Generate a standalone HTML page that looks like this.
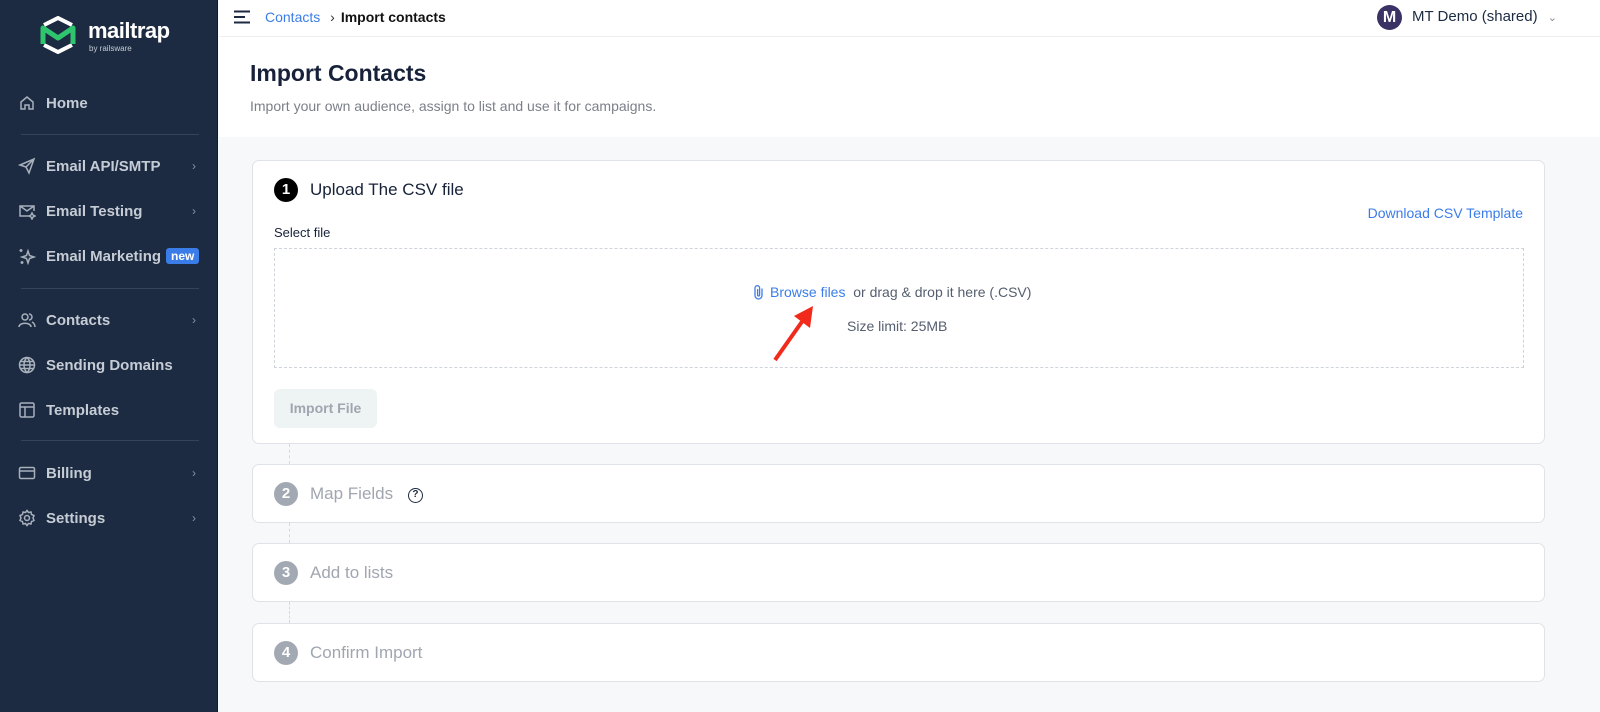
<!DOCTYPE html>
<html><head><style>
*{box-sizing:border-box;margin:0;padding:0}
body{width:1600px;height:712px;overflow:hidden;font-family:"Liberation Sans",Arial,sans-serif;background:#f7f8f9;position:relative}
.sb{position:absolute;left:0;top:0;width:218px;height:712px;background:#1c2b42;border-right:1px solid #0f1a2a}
.it{position:absolute;left:18px;display:flex;align-items:center;color:#c6ccd5;font-size:15px;font-weight:bold}
.it svg{width:18px;height:18px;margin-right:10px;stroke:#a8b0bc;fill:none;stroke-width:1.5}
.ch{position:absolute;left:192px;color:#8a94a3;font-size:12px}
.sep{position:absolute;left:21px;width:178px;height:1px;background:#34445c}
.top{position:absolute;left:219px;top:0;right:0;height:37px;background:#fff;border-bottom:1px solid #eceef0}
.ph{position:absolute;left:219px;top:37px;right:0;height:100px;background:#fff}
.card{position:absolute;left:252px;width:1293px;background:#fff;border:1px solid #dfe3e8;border-radius:7px}
.num{position:absolute;left:21px;width:24px;height:24px;border-radius:50%;color:#fff;font-weight:bold;font-size:15px;text-align:center;line-height:24px}
.ttl{position:absolute;left:57px;font-size:17px}
.dash{position:absolute;left:289px;width:0;border-left:1px dashed #d5d9de}
</style></head><body>
<div class="sb">
 <svg style="position:absolute;left:40px;top:16px" width="36" height="38" viewBox="0 0 36 38"><path d="M4 9 L18 2 L32 9" stroke="#fff" stroke-width="4" fill="none"/><path d="M4 29 L18 36 L32 29" stroke="#fff" stroke-width="4" fill="none"/><path d="M3 28 V12 L18 22 L33 12 V28" stroke="#2fc46e" stroke-width="5" fill="none" stroke-linejoin="round"/></svg>
 <div style="position:absolute;left:88px;top:18px;color:#fff;font-size:22px;font-weight:bold;letter-spacing:-0.5px">mailtrap</div>
 <div style="position:absolute;left:89px;top:44px;color:#c6ccd5;font-size:8px">by railsware</div>
 <div class="it" style="top:94px"><svg viewBox="0 0 18 18"><path d="M3 8 L9 3 L15 8 V15 H11 V11 H7 V15 H3 Z"/></svg>Home</div>
 <div class="sep" style="top:134px"></div>
 <div class="it" style="top:157px"><svg viewBox="0 0 18 18"><path d="M2 8 L16 2 L11 16 L8 10 Z M8 10 L16 2"/></svg>Email API/SMTP</div><div class="ch" style="top:159px">›</div>
 <div class="it" style="top:202px"><svg viewBox="0 0 18 18"><path d="M11 14 H2 V4 H16 V9 M2 4 L9 9 L16 4 M14 11 l1 2 l2 1 l-2 1 l-1 2 l-1-2 l-2-1 l2-1z"/></svg>Email Testing</div><div class="ch" style="top:204px">›</div>
 <div class="it" style="top:247px"><svg viewBox="0 0 18 18"><path d="M10 4 L11.5 8.5 L16 10 L11.5 11.5 L10 16 L8.5 11.5 L4 10 L8.5 8.5 Z M3 2 v3 M1.5 3.5 h3 M4 14 v3 M2.5 15.5 h3"/></svg>Email Marketing<span style="margin-left:5px;background:#3b7de8;color:#fff;font-size:12px;padding:1px 5px;border-radius:3px">new</span></div>
 <div class="sep" style="top:288px"></div>
 <div class="it" style="top:311px"><svg viewBox="0 0 18 18"><circle cx="7" cy="6" r="3"/><path d="M1 16 C1 11 13 11 13 16 M11 3 a3 3 0 0 1 0 6 M14 11 C16 12 17 14 17 16"/></svg>Contacts</div><div class="ch" style="top:313px">›</div>
 <div class="it" style="top:356px"><svg viewBox="0 0 18 18"><circle cx="9" cy="9" r="7.5"/><path d="M1.5 9 H16.5 M9 1.5 C5 5 5 13 9 16.5 C13 13 13 5 9 1.5 M2.5 5.5 H15.5 M2.5 12.5 H15.5"/></svg>Sending Domains</div>
 <div class="it" style="top:401px"><svg viewBox="0 0 18 18"><rect x="2" y="2" width="14" height="14" rx="1.5"/><path d="M2 6 H16 M7 6 V16"/></svg>Templates</div>
 <div class="sep" style="top:440px"></div>
 <div class="it" style="top:464px"><svg viewBox="0 0 18 18"><rect x="1.5" y="3.5" width="15" height="11" rx="1.5"/><path d="M1.5 7 H16.5"/></svg>Billing</div><div class="ch" style="top:466px">›</div>
 <div class="it" style="top:509px"><svg viewBox="0 0 18 18"><circle cx="9" cy="9" r="2.5"/><path d="M9 1.5 L10.5 3.5 L13 3 L13.5 5.5 L16 6.5 L15 9 L16 11.5 L13.5 12.5 L13 15 L10.5 14.5 L9 16.5 L7.5 14.5 L5 15 L4.5 12.5 L2 11.5 L3 9 L2 6.5 L4.5 5.5 L5 3 L7.5 3.5 Z"/></svg>Settings</div><div class="ch" style="top:511px">›</div>
</div>
<div class="top">
 <svg style="position:absolute;left:14px;top:10px" width="18" height="14"><path d="M1 1.5H17M1 7H12M1 12.5H17" stroke="#1c2b42" stroke-width="2"/></svg>
 <div style="position:absolute;left:46px;top:9px;font-size:14px;color:#3b7de8">Contacts <span style="color:#333;margin:0 6px">›</span><b style="color:#111">Import contacts</b></div>
 <div style="position:absolute;left:1158px;top:5px;width:25px;height:25px;border-radius:50%;background:#3a3264;color:#fff;font-weight:bold;font-size:16px;text-align:center;line-height:25px">M</div>
 <div style="position:absolute;left:1193px;top:8px;font-size:15px;color:#1c2b42">MT Demo (shared) <span style="font-size:11px;color:#888;margin-left:6px">⌄</span></div>
</div>
<div class="ph">
 <div style="position:absolute;left:31px;top:23px;font-size:23px;font-weight:bold;color:#17223a">Import Contacts</div>
 <div style="position:absolute;left:31px;top:61px;font-size:14px;color:#7a7f88">Import your own audience, assign to list and use it for campaigns.</div>
</div>
<div class="card" style="top:160px;height:284px">
 <div class="num" style="top:17px;background:#000">1</div>
 <div class="ttl" style="top:19px;color:#17223a">Upload The CSV file</div>
 <div style="position:absolute;right:21px;top:44px;font-size:14px;color:#3b7de8">Download CSV Template</div>
 <div style="position:absolute;left:21px;top:64px;font-size:13px;color:#17223a">Select file</div>
 <div style="position:absolute;left:21px;top:87px;width:1250px;height:120px;border:1px dashed #cfd4da">
  <div style="position:absolute;left:478px;top:35px;font-size:14px;color:#555e6e"><span style="color:#3b7de8"><svg width="12" height="16" viewBox="0 0 12 16" style="vertical-align:-3px;margin-right:5px"><path d="M9 5 V11.5 A3.5 3.5 0 0 1 2 11.5 V4 A2.3 2.3 0 0 1 6.6 4 V11 A1 1 0 0 1 4.6 11 V5.5" fill="none" stroke="#3b7de8" stroke-width="1.3" stroke-linecap="round"/></svg>Browse files</span> &nbsp;or drag &amp; drop it here (.CSV)</div>
  <div style="position:absolute;left:572px;top:69px;font-size:14px;color:#555e6e">Size limit: 25MB</div>
  <svg style="position:absolute;left:495px;top:55px" width="50" height="60"><path d="M5 56 L36 12" stroke="#f12a1c" stroke-width="4"/><path d="M43 2 L24 12 L40 24 Z" fill="#f12a1c"/></svg>
 </div>
 <div style="position:absolute;left:21px;top:228px;width:103px;height:39px;background:#eef3f4;border-radius:6px;color:#a0a6b0;font-weight:bold;font-size:14px;text-align:center;line-height:39px">Import File</div>
</div>
<div class="dash" style="top:444px;height:20px"></div>
<div class="card" style="top:464px;height:59px">
 <div class="num" style="top:17px;background:#a3a9b2">2</div>
 <div class="ttl" style="top:19px;color:#a0a6b0">Map Fields <span style="display:inline-block;margin-left:10px;width:15px;height:15px;border:1.5px solid #1c2b42;border-radius:50%;font-size:10px;color:#1c2b42;text-align:center;line-height:12px;vertical-align:2px;font-weight:bold">?</span></div>
</div>
<div class="dash" style="top:523px;height:20px"></div>
<div class="card" style="top:543px;height:59px">
 <div class="num" style="top:17px;background:#a3a9b2">3</div>
 <div class="ttl" style="top:19px;color:#a0a6b0">Add to lists</div>
</div>
<div class="dash" style="top:602px;height:21px"></div>
<div class="card" style="top:623px;height:59px">
 <div class="num" style="top:17px;background:#a3a9b2">4</div>
 <div class="ttl" style="top:19px;color:#a0a6b0">Confirm Import</div>
</div>
</body></html>
